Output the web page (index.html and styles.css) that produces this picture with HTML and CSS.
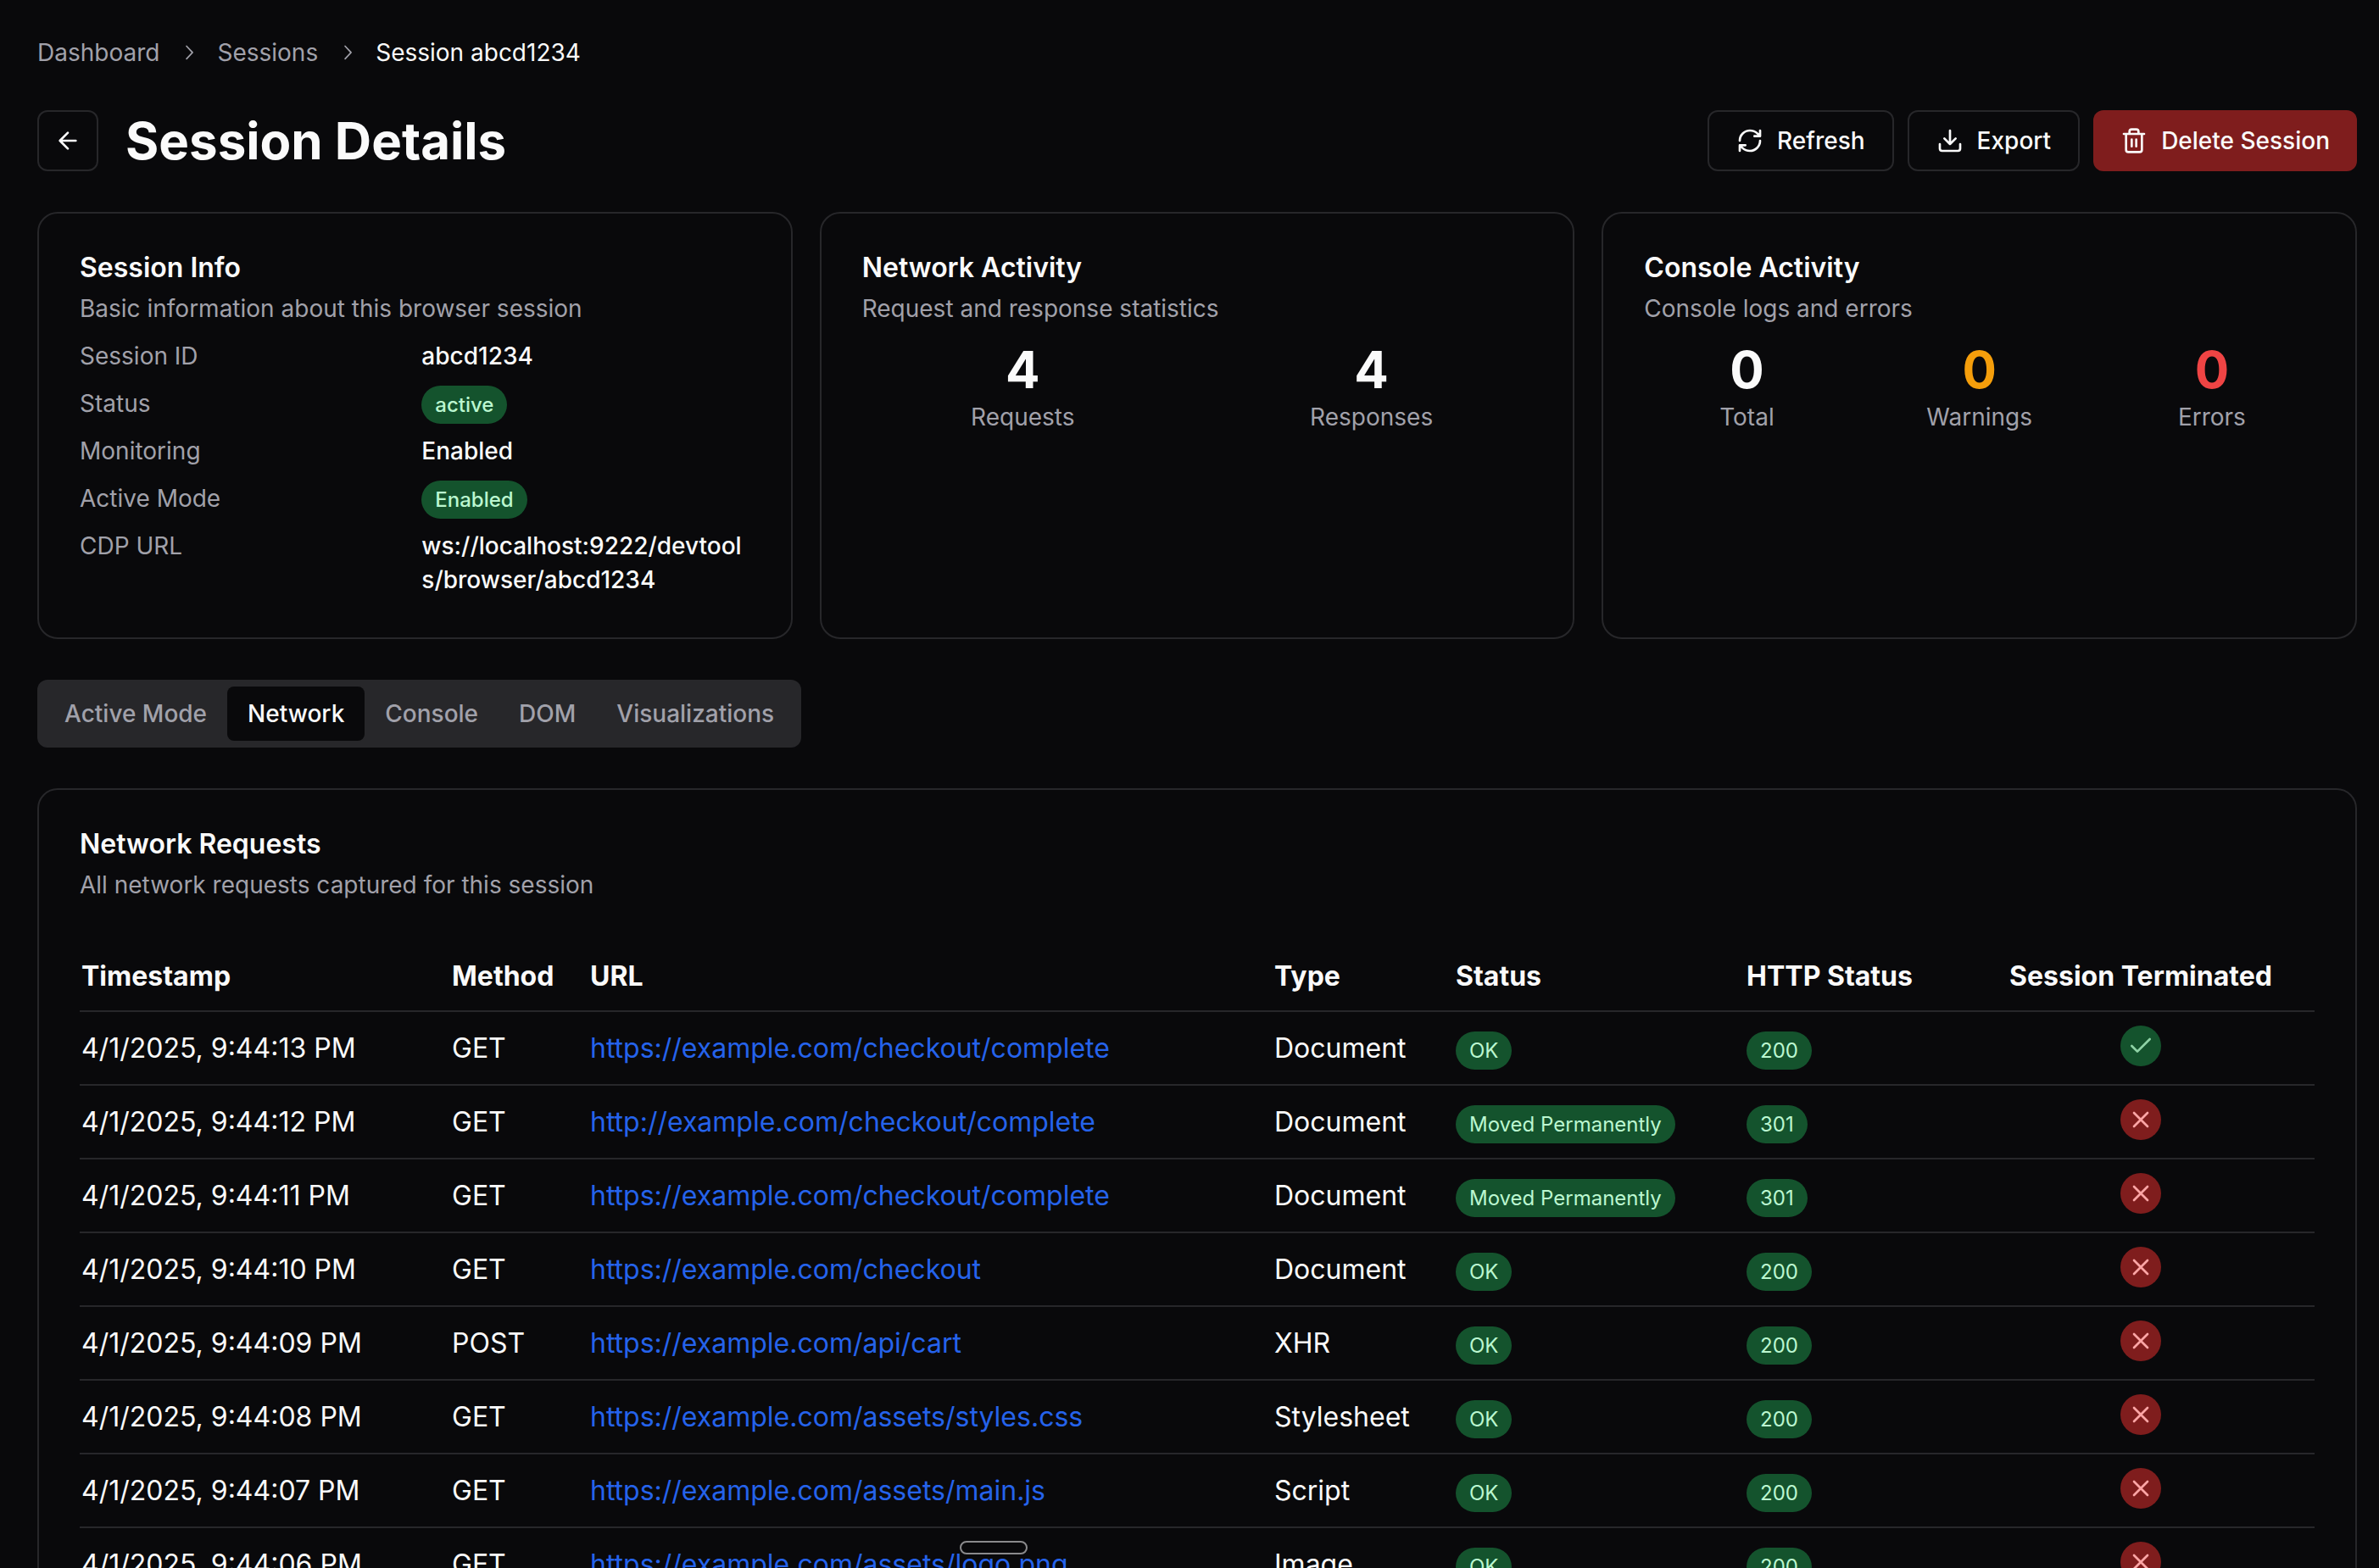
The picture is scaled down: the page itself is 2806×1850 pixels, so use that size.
FILE: index.html
```html
<!DOCTYPE html>
<html lang="en">
<head>
<meta charset="UTF-8" />
<title>Session Details</title>
<link rel="stylesheet" href="styles.css">
</head>
<body>

<svg class="sprite" aria-hidden="true">
  <symbol id="chevron" viewBox="0 0 15 15"><path fill="currentColor" d="M6.16 3.14a.45.45 0 0 1 .64.02l3.75 4a.45.45 0 0 1 0 .62l-3.75 4a.45.45 0 1 1-.66-.62L9.58 7.5 6.14 3.81a.45.45 0 0 1 .02-.67z"/></symbol>
  <symbol id="check" viewBox="0 0 24 24"><path d="M20 6L9 17l-5-5"/></symbol>
  <symbol id="cross" viewBox="0 0 24 24"><path d="M18 6L6 18M6 6l12 12"/></symbol>
</svg>

<nav class="breadcrumb" aria-label="Breadcrumb">
  <a href="#">Dashboard</a>
  <svg><use href="#chevron"/></svg>
  <a href="#">Sessions</a>
  <svg><use href="#chevron"/></svg>
  <span class="current">Session abcd1234</span>
</nav>

<header class="page-header">
  <button class="btn btn-icon" aria-label="Back">
    <svg class="icon" viewBox="0 0 24 24"><path d="M12 19l-7-7 7-7M19 12H5"/></svg>
  </button>
  <h1>Session Details</h1>
  <div class="actions">
    <button class="btn"><svg class="icon" viewBox="0 0 24 24"><path d="M3 12a9 9 0 0 1 9-9 9.75 9.75 0 0 1 6.74 2.74L21 8M21 3v5h-5M21 12a9 9 0 0 1-9 9 9.75 9.75 0 0 1-6.74-2.74L3 16M8 16H3v5"/></svg>Refresh</button>
    <button class="btn"><svg class="icon" viewBox="0 0 24 24"><path d="M21 15v4a2 2 0 0 1-2 2H5a2 2 0 0 1-2-2v-4M7 10l5 5 5-5M12 15V3"/></svg>Export</button>
    <button class="btn btn-danger"><svg class="icon" viewBox="0 0 24 24"><path d="M3 6h18M19 6v14a2 2 0 0 1-2 2H7a2 2 0 0 1-2-2V6M8 6V4a2 2 0 0 1 2-2h4a2 2 0 0 1 2 2v2M10 11v6M14 11v6"/></svg>Delete Session</button>
  </div>
</header>

<main>
  <div class="cards">
    <section class="card">
      <h2>Session Info</h2>
      <p class="desc">Basic information about this browser session</p>
      <dl class="info">
        <dt>Session ID</dt><dd>abcd1234</dd>
        <dt>Status</dt><dd><span class="badge">active</span></dd>
        <dt>Monitoring</dt><dd>Enabled</dd>
        <dt>Active Mode</dt><dd><span class="badge">Enabled</span></dd>
        <dt>CDP URL</dt><dd>ws://localhost:9222/devtools/browser/abcd1234</dd>
      </dl>
    </section>
    <section class="card">
      <h2>Network Activity</h2>
      <p class="desc">Request and response statistics</p>
      <div class="stats">
        <div><div class="num">4</div>Requests</div>
        <div><div class="num">4</div>Responses</div>
      </div>
    </section>
    <section class="card">
      <h2>Console Activity</h2>
      <p class="desc">Console logs and errors</p>
      <div class="stats">
        <div><div class="num">0</div>Total</div>
        <div><div class="num warn">0</div>Warnings</div>
        <div><div class="num error">0</div>Errors</div>
      </div>
    </section>
  </div>

  <div class="tabs" role="tablist">
    <button role="tab">Active Mode</button>
    <button role="tab" class="active" aria-selected="true">Network</button>
    <button role="tab">Console</button>
    <button role="tab">DOM</button>
    <button role="tab">Visualizations</button>
  </div>

  <section class="card">
    <h2>Network Requests</h2>
    <p class="desc">All network requests captured for this session</p>
    <table id="requests">
      <colgroup>
        <col class="c-time"><col class="c-method"><col><col class="c-type"><col class="c-status"><col class="c-http"><col class="c-term">
      </colgroup>
      <thead>
        <tr><th>Timestamp</th><th>Method</th><th>URL</th><th>Type</th><th>Status</th><th>HTTP Status</th><th class="center">Session Terminated</th></tr>
      </thead>
      <tbody>
        <tr><td>4/1/2025, 9:44:13 PM</td><td>GET</td><td><a href="#">https://example.com/checkout/complete</a></td><td>Document</td><td><span class="badge">OK</span></td><td><span class="badge">200</span></td><td><span class="dot yes"><svg><use href="#check"/></svg></span></td></tr>
        <tr><td>4/1/2025, 9:44:12 PM</td><td>GET</td><td><a href="#">http://example.com/checkout/complete</a></td><td>Document</td><td><span class="badge">Moved Permanently</span></td><td><span class="badge">301</span></td><td><span class="dot no"><svg><use href="#cross"/></svg></span></td></tr>
        <tr><td>4/1/2025, 9:44:11 PM</td><td>GET</td><td><a href="#">https://example.com/checkout/complete</a></td><td>Document</td><td><span class="badge">Moved Permanently</span></td><td><span class="badge">301</span></td><td><span class="dot no"><svg><use href="#cross"/></svg></span></td></tr>
        <tr><td>4/1/2025, 9:44:10 PM</td><td>GET</td><td><a href="#">https://example.com/checkout</a></td><td>Document</td><td><span class="badge">OK</span></td><td><span class="badge">200</span></td><td><span class="dot no"><svg><use href="#cross"/></svg></span></td></tr>
        <tr><td>4/1/2025, 9:44:09 PM</td><td>POST</td><td><a href="#">https://example.com/api/cart</a></td><td>XHR</td><td><span class="badge">OK</span></td><td><span class="badge">200</span></td><td><span class="dot no"><svg><use href="#cross"/></svg></span></td></tr>
        <tr><td>4/1/2025, 9:44:08 PM</td><td>GET</td><td><a href="#">https://example.com/assets/styles.css</a></td><td>Stylesheet</td><td><span class="badge">OK</span></td><td><span class="badge">200</span></td><td><span class="dot no"><svg><use href="#cross"/></svg></span></td></tr>
        <tr><td>4/1/2025, 9:44:07 PM</td><td>GET</td><td><a href="#">https://example.com/assets/main.js</a></td><td>Script</td><td><span class="badge">OK</span></td><td><span class="badge">200</span></td><td><span class="dot no"><svg><use href="#cross"/></svg></span></td></tr>
        <tr><td>4/1/2025, 9:44:06 PM</td><td>GET</td><td><a href="#">https://example.com/assets/logo.png</a></td><td>Image</td><td><span class="badge">OK</span></td><td><span class="badge">200</span></td><td><span class="dot no"><svg><use href="#cross"/></svg></span></td></tr>
      </tbody>
    </table>
  </section>
</main>

<div class="handle"></div>

</body>
</html>
```
FILE: styles.css
```css
* {
  box-sizing: border-box;
  margin: 0;
  padding: 0;
}
body {
  font-family: Inter, sans-serif;
  font-size: 28px;
  line-height: 40px;
  background-color: #09090b;
  color: #fafafa;
  padding: 42px 26px 48px 44px;
}
a {
  text-decoration: none;
}
.sprite {
  display: none;
}
.breadcrumb {
  display: flex;
  align-items: center;
  gap: 20px;
  color: #a1a1aa;
}
.breadcrumb a {
  color: #a1a1aa;
}
.breadcrumb svg {
  width: 28px;
  height: 28px;
}
.breadcrumb .current {
  color: #fafafa;
}

.page-header {
  display: flex;
  align-items: center;
  margin: 48px 0;
}
h1 {
  font-size: 60px;
  line-height: 72px;
  font-weight: 700;
  margin-left: 32px;
}
.actions {
  display: flex;
  gap: 16px;
  margin-left: auto;
}
.btn {
  display: flex;
  align-items: center;
  justify-content: center;
  gap: 16px;
  height: 72px;
  padding: 0 32px;
  border: 2px solid #27272a;
  border-radius: 12px;
  background-color: #09090b;
  color: #fafafa;
  font: 500 28px/40px Inter, sans-serif;
}
.btn-icon {
  width: 72px;
  padding: 0;
}
.btn-danger {
  background-color: #7f1d1d;
  border: none;
}
.icon {
  width: 32px;
  height: 32px;
  fill: none;
  stroke: currentColor;
  stroke-width: 2;
  stroke-linecap: round;
  stroke-linejoin: round;
}

.cards {
  display: grid;
  grid-template-columns: repeat(3, 1fr);
  gap: 32px;
}
.card {
  border: 2px solid #27272a;
  border-radius: 24px;
  padding: 48px;
}
h2 {
  font-size: 32px;
  line-height: 32px;
  font-weight: 600;
  margin-bottom: 12px;
}
.desc {
  color: #a1a1aa;
}
.info {
  display: grid;
  grid-template-columns: 1fr 1fr;
  gap: 16px;
  margin-top: 16px;
}
.info dt {
  color: #a1a1aa;
}
.info dd {
  font-weight: 500;
  word-break: break-all;
}
.badge {
  padding: 8px 16px;
  border-radius: 24px;
  background-color: #14532d;
  color: #bbf7d0;
  font-size: 24px;
  line-height: 32px;
}
.stats {
  display: grid;
  grid-auto-flow: column;
  grid-auto-columns: 1fr;
  gap: 32px;
  margin-top: 16px;
  text-align: center;
  color: #a1a1aa;
}
.num {
  font-size: 60px;
  line-height: 72px;
  font-weight: 700;
  color: #fafafa;
}
.num.warn {
  color: #f59e0b;
}
.num.error {
  color: #ef4444;
}

.tabs {
  display: flex;
  width: fit-content;
  margin: 48px 0;
  padding: 8px;
  border-radius: 12px;
  background-color: #27272a;
}
.tabs button {
  padding: 12px 24px;
  border: none;
  border-radius: 8px;
  background: none;
  color: #a1a1aa;
  font: 500 28px/40px Inter, sans-serif;
}
.tabs .active {
  background-color: #09090b;
  color: #fafafa;
}

table {
  width: 100%;
  margin-top: 48px;
  table-layout: fixed;
  border-collapse: collapse;
  font-size: 32px;
  line-height: 48px;
}
tr {
  border-bottom: 2px solid #27272a;
}
th, td {
  padding: 16px 2px;
  text-align: left;
  vertical-align: middle;
  white-space: nowrap;
}
th.center {
  text-align: center;
}
td a {
  color: #2563eb;
}
.c-time { width: 437px; }
.c-method { width: 163px; }
.c-type { width: 214px; }
.c-status { width: 343px; }
.c-http { width: 262px; }
.c-term { width: 410px; }

.dot {
  display: flex;
  align-items: center;
  justify-content: center;
  width: 48px;
  height: 48px;
  margin: 0 auto 5px;
  border-radius: 50%;
}
.dot svg {
  width: 32px;
  height: 32px;
  fill: none;
  stroke: currentColor;
  stroke-width: 2;
  stroke-linecap: round;
  stroke-linejoin: round;
}
.dot.yes {
  background-color: #14532d;
  color: #8fd3a6;
}
.dot.no {
  background-color: #7f1d1d;
  color: #fca5a5;
}

/* drag handle at the bottom of the window */
.handle {
  position: fixed;
  left: 1132px;
  bottom: 16px;
  width: 80px;
  height: 16px;
  border: 2px solid #8a8a8c;
  border-radius: 8px;
  background-color: #09090b;
}
```
